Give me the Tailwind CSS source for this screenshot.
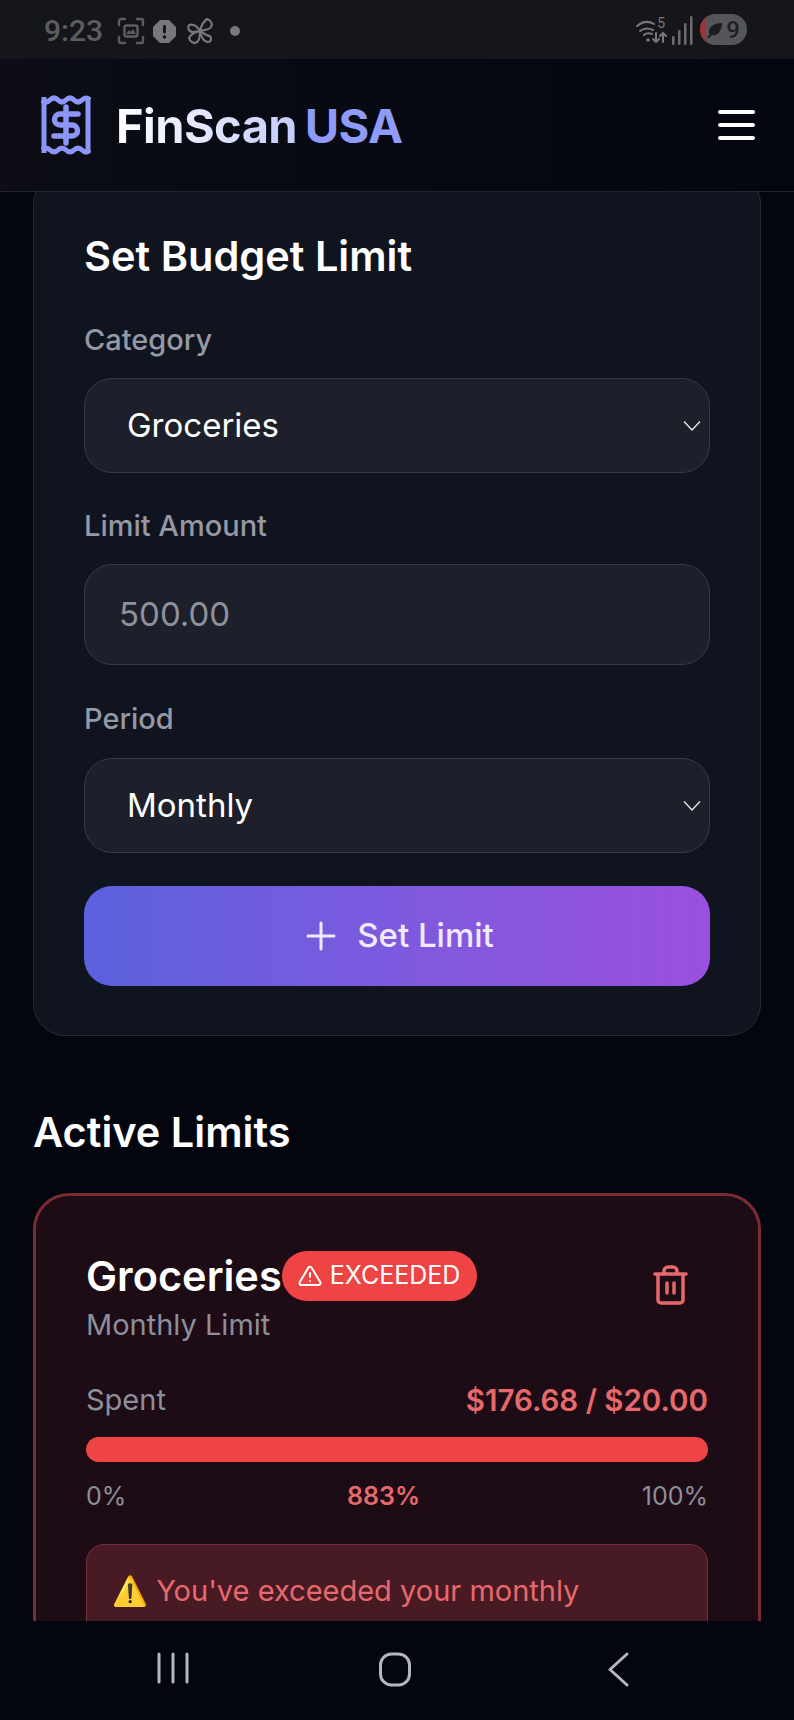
<!DOCTYPE html>
<html lang="en">
<head>
  <meta charset="UTF-8" />
  <meta name="viewport" content="width=device-width, initial-scale=1.0" />
  <title>FinScan USA</title>
  <script src="https://cdn.jsdelivr.net/npm/@tailwindcss/browser@4"></script>
</head>
<body class="bg-[#03060f] text-white font-['Inter',sans-serif]">
  <div class="flex flex-col h-[1720px] w-[794px] overflow-hidden">

    <!-- Status bar -->
    <div class="h-[59px] shrink-0 bg-[#14161b] flex items-center justify-between pl-[44px] pr-[47px] pt-[3px] text-[#5c5d61]">
      <div class="flex items-center">
        <span class="text-[30px] leading-none font-medium font-['Roboto',sans-serif] w-[71px]">9:23</span>
        <svg class="w-[28px] h-[28px] ml-[2px]" viewBox="0 0 28 28" fill="none" stroke="currentColor" stroke-width="2.4" stroke-linecap="round">
          <path d="M2 8V4a2 2 0 0 1 2-2h4M20 2h4a2 2 0 0 1 2 2v4M26 20v4a2 2 0 0 1-2 2h-4M8 26H4a2 2 0 0 1-2-2v-4" />
          <rect x="7.500" y="8.500" width="13" height="11" rx="2" />
          <path d="M9 17l3-4 2 2 2-3 3 5z" fill="currentColor" stroke="none" />
        </svg>
        <svg class="w-[23px] h-[23px] ml-[8px]" viewBox="0 0 23 23">
          <path d="M7 0h9l7 7v9l-7 7H7l-7-7V7z" fill="#77787b" />
          <rect x="10" y="5" width="3" height="8.500" rx="1.400" fill="#14161b" />
          <circle cx="11.500" cy="17" r="1.800" fill="#14161b" />
        </svg>
        <svg class="w-[28px] h-[28px] ml-[10px]" viewBox="0 0 28 28" fill="none" stroke="#77787b" stroke-width="2.2" stroke-linejoin="round">
          <path d="M14 14C11 9 7 7 3 8c-2 3 0 7 4 7 2 0 5-1 7-1z" />
          <path d="M14 14c1-5 3-9 7-12 4 1 6 5 4 8-2 3-7 3-11 4z" />
          <path d="M14 14c-5 1-9 3-11 7 1 4 5 6 8 4 3-2 3-7 3-11z" />
          <path d="M14 14c3 2 7 5 10 5 2 3 1 6-2 6-4 0-7-5-8-11z" />
        </svg>
        <span class="w-[10px] h-[10px] rounded-full bg-[#77787b] ml-[16px]"></span>
      </div>
      <div class="flex items-center -mt-[3px]">
        <svg class="w-[32px] h-[30px]" viewBox="0 0 32 30" fill="none" stroke="#77787b" stroke-width="2" stroke-linecap="round">
          <path d="M1 11c6-5 12-5 17-2M4 16c4-3 9-3 13-1M8 20c2-2 5-2 8-1" />
          <circle cx="12" cy="25" r="1.800" fill="#77787b" stroke="none" />
          <path d="M20 18v9M17 24l3 3 3-3M27 27v-9M24 21l3-3 3 3" />
        </svg>
        <span class="text-[14px] leading-none -ml-[11px] -mt-[14px] text-[#77787b] font-['Roboto',sans-serif]">5</span>
        <svg class="w-[22px] h-[32px] ml-[6px]" viewBox="0 0 22 32" fill="#6b6c70">
          <rect x="1" y="22" width="2.500" height="9" rx="1.200" />
          <rect x="7" y="16" width="2.500" height="15" rx="1.200" />
          <rect x="13" y="9" width="2.500" height="22" rx="1.200" />
          <rect x="19" y="2" width="2.500" height="29" rx="1.200" />
        </svg>
        <div class="relative ml-[7px] w-[47px] h-[31px] rounded-full bg-[#56565a] overflow-hidden flex items-center justify-end pr-[7px]">
          <div class="absolute left-0 top-0 h-full w-[6px] bg-[#a03434]"></div>
          <svg class="absolute left-[6px] top-[7px] w-[17px] h-[17px]" viewBox="0 0 17 17" fill="#1c1d20">
            <path d="M3 12C2 6 8 2 16 2c0 8-4 13-10 12l-3 3-2-1 3-3z" />
          </svg>
          <span class="text-[24px] leading-none font-medium text-[#1e1f22] font-['Roboto',sans-serif]">9</span>
        </div>
      </div>
    </div>

    <!-- Header -->
    <header class="h-[133px] shrink-0 bg-gradient-to-r from-[#0c0d15] to-[#03060f] border-b border-[#23252e] flex items-center justify-between pl-[41px] pr-[39px] z-10 relative">
      <div class="flex items-center">
        <svg class="w-[50px] h-[60px]" viewBox="0 0 50 60" fill="none" stroke="#8b96f8" stroke-width="5">
          <path d="M3 2v56M47 2v56" />
          <path d="M1 5q4 4 8 0t8 0 8 0 8 0 8 0 8 0" />
          <path d="M1 55q4-4 8 0t8 0 8 0 8 0 8 0 8 0" />
          <path d="M37 19H19a5.500 5.500 0 0 0 0 11h12a5.500 5.500 0 0 1 0 11H13M25 12v36" stroke-width="5.500" stroke-linecap="round" />
        </svg>
        <div class="ml-[25px] text-[47px] leading-none font-bold tracking-[-0.012em] font-['Inter',sans-serif]">
          <span class="bg-gradient-to-r from-white to-[#c5ccfb] bg-clip-text text-transparent">FinScan</span>
          <span class="text-[#8f9bf8] -ml-[3px]">USA</span>
        </div>
      </div>
      <div class="flex flex-col gap-[9px] w-[37px]">
        <div class="h-[4px] rounded-full bg-white"></div>
        <div class="h-[4px] rounded-full bg-white"></div>
        <div class="h-[4px] rounded-full bg-white"></div>
      </div>
    </header>

    <!-- Scrolled content -->
    <main class="flex-1 min-h-0 overflow-hidden px-[33px]">
      <section class="-mt-[20px] h-[864px] bg-[#10141e] border border-[#282b35] rounded-[32px] px-[50px] pt-[58px]">
        <h2 class="text-[41.500px] leading-[50px] font-semibold">Set Budget Limit</h2>

        <label class="block mt-[39px] text-[29px] leading-[40px] font-medium text-[#9598a5]">Category</label>
        <div class="mt-[18px] h-[95px] flex items-center justify-between pl-[42px] pr-[8px] bg-[#1d1f2a] border border-[#383a46] rounded-[28px]">
          <span class="text-[33px]">Groceries</span>
          <svg class="w-[18px] h-[12px]" viewBox="0 0 18 12" fill="none" stroke="#e5e7eb" stroke-width="1.400"><path d="M1 1.500l8 8.500 8-8.500" /></svg>
        </div>

        <label class="block mt-[33px] text-[29px] leading-[40px] font-medium text-[#9598a5]">Limit Amount</label>
        <div class="mt-[18px] h-[101px] flex items-center pl-[34px] bg-[#1d1f2a] border border-[#383a46] rounded-[28px]">
          <span class="text-[33px] text-[#8f919d]">500.00</span>
        </div>

        <label class="block mt-[34px] text-[29px] leading-[40px] font-medium text-[#9598a5]">Period</label>
        <div class="mt-[19px] h-[95px] flex items-center justify-between pl-[42px] pr-[8px] bg-[#1d1f2a] border border-[#383a46] rounded-[28px]">
          <span class="text-[33px]">Monthly</span>
          <svg class="w-[18px] h-[12px]" viewBox="0 0 18 12" fill="none" stroke="#e5e7eb" stroke-width="1.400"><path d="M1 1.500l8 8.500 8-8.500" /></svg>
        </div>

        <button class="mt-[33px] w-full h-[100px] flex items-center justify-center gap-[21px] pl-[6px] rounded-[28px] bg-gradient-to-r from-[#5b61dd] to-[#9a4fe0] text-[#f0eafc] text-[33px] font-medium">
          <svg class="w-[30px] h-[30px]" viewBox="0 0 30 30" fill="none" stroke="currentColor" stroke-width="3" stroke-linecap="round"><path d="M15 2v26M2 15h26" /></svg>
          Set Limit
        </button>
      </section>

      <h2 class="mt-[71px] text-[41.500px] leading-[50px] font-semibold">Active Limits</h2>

      <section class="mt-[36px] bg-[#1d0c16] border-[3px] border-[#7a2b33] rounded-[36px] px-[50px] pt-[55px] h-[600px]">
        <div class="flex justify-between items-start">
          <div>
            <div class="flex items-center">
              <span class="text-[41.500px] leading-[50px] font-semibold">Groceries</span>
              <span class="h-[50px] w-[195px] rounded-full bg-[#ef4444] flex items-center pl-[16px] gap-[8px] text-[25px]">
                <svg class="w-[24px] h-[24px]" viewBox="0 0 24 24" fill="none" stroke="currentColor" stroke-width="2" stroke-linecap="round" stroke-linejoin="round">
                  <path d="M10.300 3.800 1.800 18a2 2 0 0 0 1.700 3h17a2 2 0 0 0 1.700-3L13.700 3.800a2 2 0 0 0-3.400 0z" /><path d="M12 9v4M12 17h.010" />
                </svg>
                EXCEEDED
              </span>
            </div>
            <div class="text-[29px] leading-[40px] text-[#8c8f9c] mt-[4px]">Monthly Limit</div>
          </div>
          <svg class="w-[35px] h-[40px] mt-[14px] mr-[20px]" viewBox="0 0 35 40" fill="none" stroke="#e8696b" stroke-width="3.500" stroke-linecap="round" stroke-linejoin="round">
            <path d="M2 9h31M11 9V6a4 4 0 0 1 4-4h5a4 4 0 0 1 4 4v3M5 9v26a3 3 0 0 0 3 3h19a3 3 0 0 0 3-3V9M14 18v10M21 18v10" />
          </svg>
        </div>

        <div class="flex justify-between items-center mt-[35px]">
          <span class="text-[29px] leading-[40px] text-[#8c8f9c]">Spent</span>
          <span class="text-[29.500px] leading-[40px] font-semibold text-[#e8696b]">$176.68 / $20.00</span>
        </div>

        <div class="mt-[17px] h-[25px] rounded-full bg-[#ef4444]"></div>

        <div class="relative flex justify-between mt-[17px] text-[25px] leading-[34px] text-[#8c8f9c]">
          <span>0%</span>
          <span class="absolute left-[261px] font-semibold text-[#e8696b]">883%</span>
          <span>100%</span>
        </div>

        <div class="mt-[31px] h-[200px] bg-[#471a24] border border-[#75303a] rounded-[18px] pl-[25px] pr-[20px] pt-[23px] text-[29px] leading-[44px] text-[#e8696b]">
          <span class="font-['Noto_Sans',sans-serif]">⚠️</span> You've exceeded your monthly
        </div>
      </section>
    </main>

    <!-- Android nav -->
    <nav class="h-[99px] shrink-0 bg-[#03060f] relative z-10 flex items-start pl-[156px] pt-[31px]">
      <svg class="w-[34px] h-[32px]" viewBox="0 0 34 32" fill="none" stroke="#b4b7bd" stroke-width="3" stroke-linecap="round"><path d="M3 2v28M17 2v28M31 2v28" /></svg>
      <svg class="w-[34px] h-[36px] ml-[188px]" viewBox="0 0 34 36" fill="none" stroke="#b4b7bd" stroke-width="3"><rect x="2.500" y="2" width="29" height="31" rx="11" /></svg>
      <svg class="w-[24px] h-[36px] ml-[194px]" viewBox="0 0 24 36" fill="none" stroke="#b4b7bd" stroke-width="3" stroke-linecap="round" stroke-linejoin="round"><path d="M21 2 4 17.500 21 33" /></svg>
    </nav>
  </div>
</body>
</html>
